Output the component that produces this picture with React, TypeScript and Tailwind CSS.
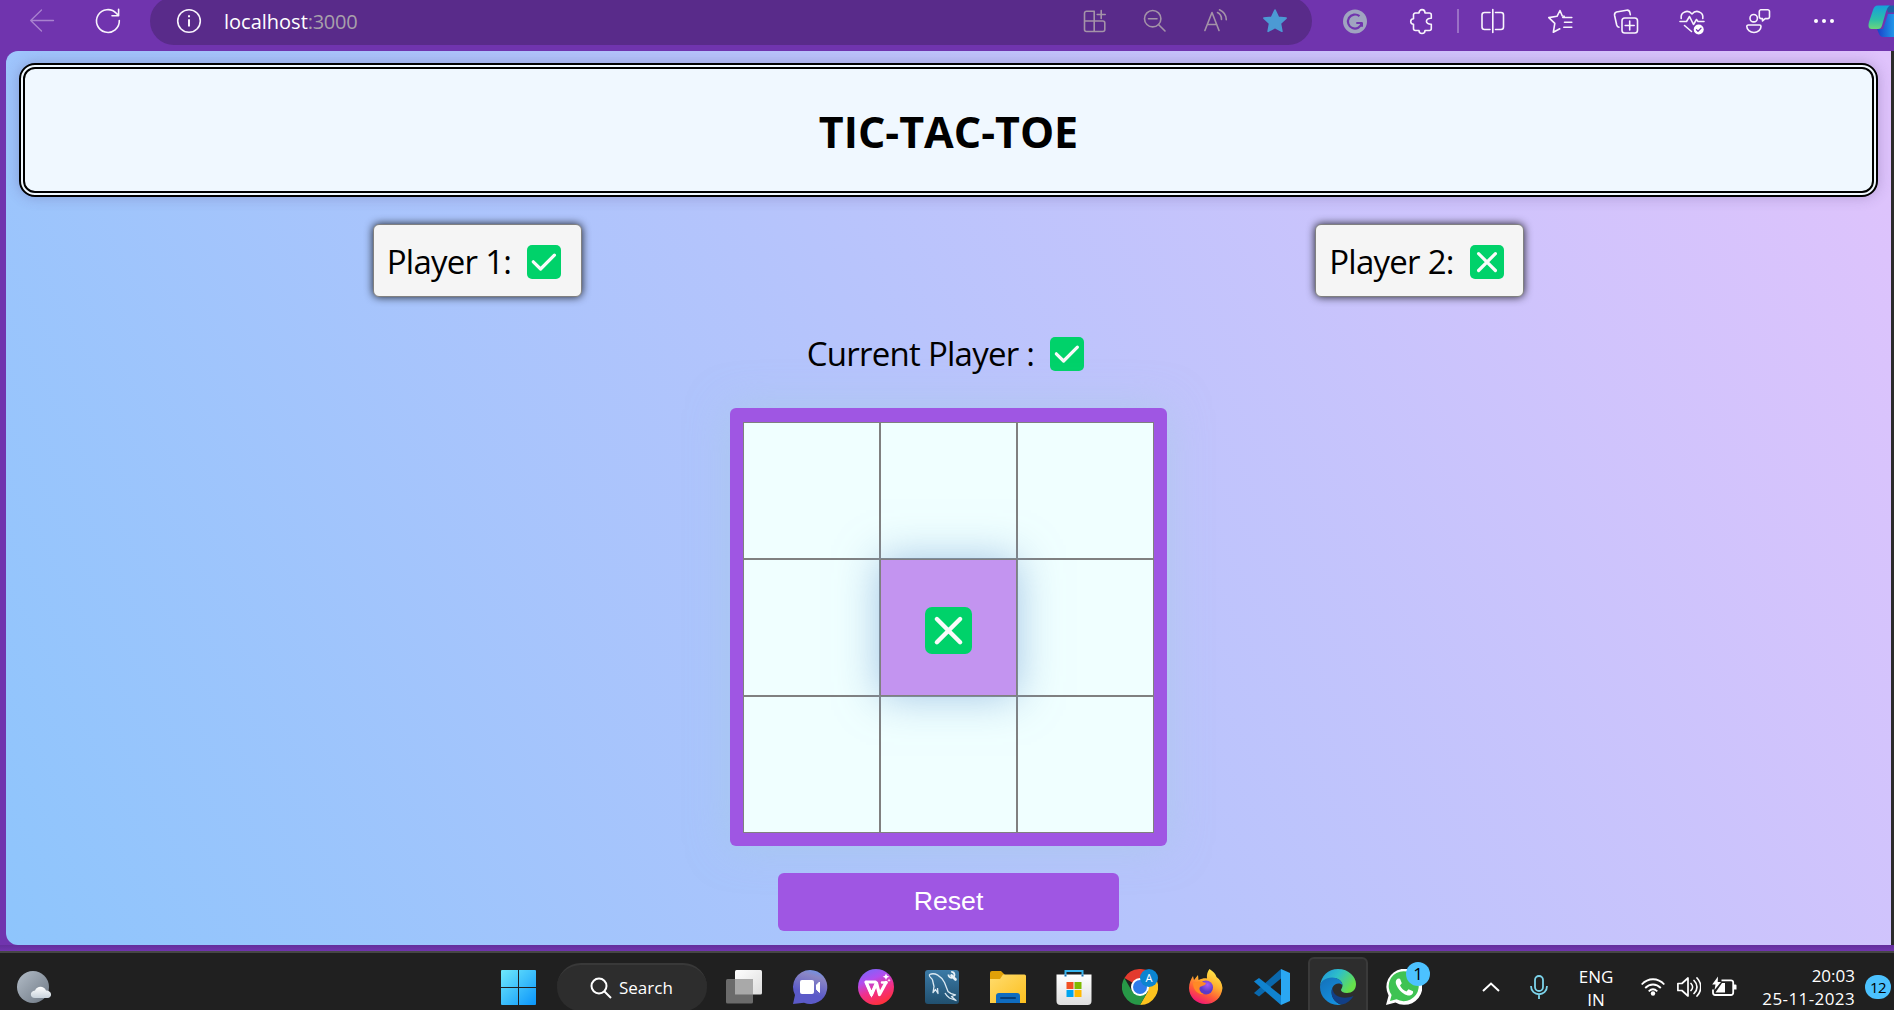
import type { ReactNode } from "react";

function Mark({ kind, className }: { kind: "check" | "cross"; className: string }) {
  return (
    <svg viewBox="0 0 34 34" className={className} fill="none" stroke="#fafafa" strokeWidth="3.2" strokeLinecap="round" strokeLinejoin="round">
      <rect width="34" height="34" rx="5" fill="#00d26a" stroke="none" />
      {kind === "check" ? <path d="M6.3 16.8l7.3 7.2L27.4 10.2" /> : <path d="M8.6 8.7l16.8 16.8M25.4 8.7L8.6 25.5" />}
    </svg>
  );
}

function Line({ children, color = "#f8f4fc" }: { children: ReactNode; color?: string }) {
  return (
    <svg viewBox="0 0 24 24" className="size-6 shrink-0 overflow-visible" fill="none" stroke={color} strokeWidth="1.6" strokeLinecap="round" strokeLinejoin="round">
      {children}
    </svg>
  );
}

function Slot({ children }: { children: ReactNode }) {
  return <div className="flex w-[66.2px] shrink-0 justify-center">{children}</div>;
}

function Toolbar() {
  const muted = "#a493a8";
  return (
    <header className="h-[51px] shrink-0 overflow-hidden bg-[#7034ae]">
      <div className="-mt-[3px] flex h-12 items-center">
        <div className="flex w-[150px] shrink-0 items-center gap-[42px] pl-[30px]">
          <Line color="#a982cf"><path d="M11.5 1L.7 11.5 11.5 22M.7 11.5h22.8" strokeWidth="1.3" /></Line>
          <Line><path d="M23.3 11.5A11.4 11.4 0 1 1 20.3 4.3L22.3 6.4M22.6 .3v6.4h-6.6" /></Line>
        </div>
        <div className="flex h-12 w-[1162px] shrink-0 items-center rounded-full bg-[#592b8a] pr-[25px] pl-[27px]">
          <Line><circle cx="12" cy="12" r="11.3" /><path d="M12 10.2v7.3M12 6.3v2" strokeWidth="2" strokeLinecap="butt" /></Line>
          <span className="ml-[23px] grow pt-[2px] text-[20px] leading-none text-white">localhost<span className="tracking-[-0.3px] text-[#a8a0ab]">:3000</span></span>
          <div className="flex gap-9">
            <Line color={muted}><path d="M11 2.2H3.5A2 2 0 0 0 1.5 4.2v16.3a2 2 0 0 0 2 2h16.3a2 2 0 0 0 2-2v-6.5a2 2 0 0 0-2-2H1.5M11.2 2.2v20.3M18.2 1.5v8M14.2 5.5h8" /></Line>
            <Line color={muted}><circle cx="9.7" cy="9.700" r="8.200" /><path d="M15.7 15.7l6.300 6.300M5.500 9.700h8.500" /></Line>
            <Line color={muted}><path d="M1.900 21.500L9 3.500l7 18M4.500 15.500h9.300M14.500 3.600c2.700 1.200 4 3.600 4 6.800M16.500 .8c4.300 2 6.800 5.800 6.800 10" /></Line>
            <Line color="#4c9ad4"><path d="M12 1l3.300 7.200 7.800 .9-5.700 5.400 1.500 7.800L12 18.500l-6.900 3.800 1.500-7.800L.9 9.100l7.800-.9z" fill="#4c9ad4" /></Line>
          </div>
        </div>
        <div className="ml-[10px] flex items-center">
          <Slot>
            <Line>
              <circle cx="12" cy="12.500" r="12" fill="#a0a4c0" stroke="none" />
              <path d="M16.500 7.200a7 7 0 1 0 2.300 6.800h-5.500M18.900 13.700v4" stroke="#7034ae" strokeWidth="2.200" strokeLinecap="butt" />
            </Line>
          </Slot>
          <div className="ml-px">
            <Slot>
              <Line>
                <path d="M3.500 6.500A2 2 0 0 1 5.500 4h3.500c0-4.500 6-4.500 6 0h4.300a2 2 0 0 1 2 2v3.300c-6.500-.5-6.500 6.200 0 6v4.200a2 2 0 0 1-2 2H15c0 4-6 4-6 0H5.500a2 2 0 0 1-2-2v-4.200c-3.700-.2-3.700-5.200 0-5.500z" />
              </Line>
            </Slot>
          </div>
          <div className="mr-px ml-[2px] h-6 w-[2px] bg-[#9a70c6]" />
          <Slot><Line><path d="M9 3.500H3.500a2.500 2.500 0 0 0-2.500 2.500v12a2.500 2.500 0 0 0 2.500 2.500H9M14.500 3.500H20A2.500 2.500 0 0 1 22.500 6v12a2.500 2.500 0 0 1-2.500 2.500h-5.500M11.800 .5v23" /></Line></Slot>
          <Slot><Line><path d="M16.200 7.300l-1.900-.3L12 1.500 9 7.300 .8 8.600l6 5.700-1.500 9 6.500-3.500M14.800 8.500h9M16.500 13.300h7.300M15.800 18.300h8" /></Line></Slot>
          <Slot><Line><rect x="8" y="9" width="15.500" height="15" rx="2.700" /><path d="M15.700 12v9M11.200 16.500h9M5 18.200c-1.600-.2-1.900-.8-2.300-2.200L.6 6.500C.3 4.700 1 3.500 2.500 3L12.500 1.200c2-.3 3 .6 3.300 2.100l.5 2.400" /></Line></Slot>
          <Slot>
            <Line>
              <path d="M1.200 9.500C.2 2.700 8 .2 12 5c4-4.800 11.800-2.300 10.800 4.500M0 12.500h6.500l3-5 4 8 3-5 1.500 2h6M4.500 16.500l7 6" />
              <circle cx="18.700" cy="20.500" r="5" fill="white" stroke="none" />
              <path d="M16.500 20.700l1.500 1.500 3-3" stroke="#7034ae" strokeWidth="1.300" />
            </Line>
          </Slot>
          <Slot><Line><circle cx="7.700" cy="9.200" r="3.700" /><path d="M2.500 16h11a1.500 1.500 0 0 1 1.500 1.500c0 3-3 6-7 6s-7.200-3-7.200-6A1.500 1.500 0 0 1 2.500 16zM14.700 .8h7a1.800 1.800 0 0 1 1.800 1.800v5.200a1.800 1.800 0 0 1-1.800 1.800h-2.500L16.500 12V9.600h-1.200c-1.200 0-2-.8-2-2v-5A1.800 1.800 0 0 1 14.700 .8z" /></Line></Slot>
          <Slot><Line><g fill="white" stroke="none"><circle cx="4" cy="12" r="2" /><circle cx="12" cy="12" r="2" /><circle cx="20" cy="12" r="2" /></g></Line></Slot>
          <svg viewBox="0 0 32 32" className="ml-[10px] size-8 shrink-0">
            <defs>
              <linearGradient id="cp1" x1="0" y1="0" x2="0" y2="1"><stop stopColor="#15a0dc" /><stop offset=".6" stopColor="#2dbfa8" /><stop offset="1" stopColor="#6bd67c" /></linearGradient>
              <linearGradient id="cp2" x1="0" y1="0" x2="1" y2="0"><stop stopColor="#1a3fc8" /><stop offset="1" stopColor="#22b5f5" /></linearGradient>
            </defs>
            <path d="M18 .5h9l2 7h-9z" fill="#1a62a8" />
            <path d="M9 24h6l5-15h12v23H15c-3 0-4-3-6-8z" fill="url(#cp2)" />
            <path d="M10 .5h12c-2 1-3 3-4 6l-4 14c-.7 2.500-2 3.500-4 3.500H3.500c-3 0-3.500-3-2.500-7l4-12C6 2 7 .5 10 .5z" fill="url(#cp1)" />
          </svg>
        </div>
      </div>
    </header>
  );
}

function PlayerCard({ label, kind }: { label: string; kind: "check" | "cross" }) {
  return (
    <div className="flex h-[73px] w-[209px] items-center rounded-md border border-[#808080] bg-[#f5f5f5] pt-[2px] pl-[13px] shadow-[0_0_8px_rgba(0,0,0,0.85)]">
      <span className="text-[33px] leading-[45px] tracking-[-0.75px] whitespace-nowrap">{label}</span>
      <Mark kind={kind} className="mt-px ml-4 size-[34px]" />
    </div>
  );
}

function Game() {
  const cells: ("check" | "cross" | null)[] = [null, null, null, null, "cross", null, null, null, null];
  return (
    <main className="flex h-[894px] w-[1885px] flex-col items-center overflow-hidden rounded-l-[12px] bg-[linear-gradient(62deg,#8EC5FC_0%,#E0C3FC_100%)] pt-3 text-black">
      <h1 className="flex h-[134px] w-[1859px] shrink-0 items-center justify-center rounded-[16px] border-[6px] border-double border-black bg-[#f0f8ff] pt-[5px] text-[43px] font-bold shadow-[0_0_14px_rgba(80,60,120,0.3)]">TIC-TAC-TOE</h1>
      <div className="mt-[27px] grid w-full grid-cols-2 justify-items-center">
        <PlayerCard label="Player 1:" kind="check" />
        <PlayerCard label="Player 2:" kind="cross" />
      </div>
      <div className="mt-[34px] flex h-[45px] items-center">
        <span className="text-[33px] leading-[45px] tracking-[-0.75px] whitespace-nowrap">Current Player :</span>
        <Mark kind="check" className="mt-px mr-[6px] ml-4 size-[34px]" />
      </div>
      <div className="mt-8 grid shrink-0 grid-cols-[repeat(3,137px)] grid-rows-[repeat(3,137px)] rounded-md bg-[#9f56e3] px-[13px] pt-[14px] pb-[13px] shadow-[0_0_40px_rgba(165,205,225,0.5)]">
        {cells.map((c, i) =>
          c ? (
            <div key={i} className="z-10 flex items-center justify-center border border-[#808080] bg-[#c394f0] pt-[5px] shadow-[0_0_40px_rgba(120,165,215,0.65)]">
              <Mark kind={c} className="size-[47px]" />
            </div>
          ) : (
            <div key={i} className="border border-[#808080] bg-[#f0ffff]" />
          ),
        )}
      </div>
      <button className="mt-[27px] h-[58px] w-[341px] shrink-0 rounded-md bg-[#9f56e3] pb-px font-['Liberation_Sans',sans-serif] text-[26.67px] leading-none text-white">Reset</button>
    </main>
  );
}

function App36({ children }: { children: ReactNode }) {
  return (
    <div className="flex w-[66px] shrink-0 justify-center">
      <svg viewBox="0 0 36 36" className="size-9 overflow-visible">{children}</svg>
    </div>
  );
}

function Taskbar() {
  return (
    <footer className="h-[59px] shrink-0 overflow-hidden bg-[#202020] text-white">
      <div className="flex h-[72px] items-center border-t-2 border-[#464646] pb-[2px]">
        <div className="w-[485px] shrink-0 pl-[17px]">
          <svg viewBox="0 0 36 36" className="size-9">
            <defs>
              <linearGradient id="moon" x1="0" y1="0" x2="1" y2="1"><stop stopColor="#b3bdc8" /><stop offset="1" stopColor="#6d7783" /></linearGradient>
              <linearGradient id="cloud" x1="0" y1="0" x2="0" y2="1"><stop stopColor="#fff" /><stop offset="1" stopColor="#c9d3dc" /></linearGradient>
            </defs>
            <circle cx="16" cy="18" r="16" fill="url(#moon)" />
            <path d="M18 29c-5.500 0-5.500-7 0-7.500 2-5 9-5 11 0 6.500 0 6.500 7.500 1.500 7.500z" fill="url(#cloud)" />
          </svg>
        </div>
        <App36>
          <defs>
            <linearGradient id="win" x1="0" y1="0" x2="1" y2="1"><stop stopColor="#6fe9fb" /><stop offset="1" stopColor="#0a95fb" /></linearGradient>
            <clipPath id="panes"><path d="M1 1h17v17H1zM19 1h17v17H19zM1 19h17v17H1zM19 19h17v17H19z" /></clipPath>
          </defs>
          <rect x="1" y="1" width="35" height="35" rx="1" fill="url(#win)" clipPath="url(#panes)" />
        </App36>
        <div className="mr-1 ml-[6px] flex h-12 w-[150px] shrink-0 items-center rounded-full border-t-2 border-[#393939] bg-[#2d2d2d] pl-[33px]">
          <svg viewBox="0 0 22 22" className="size-[22px]" fill="none" stroke="white" strokeWidth="2"><circle cx="9" cy="9" r="7.500" /><path d="M14.500 14.500l6.500 6.500" /></svg>
          <span className="ml-[7px] text-[17px]">Search</span>
        </div>
        <App36>
          <defs>
            <linearGradient id="tv" x1="0" y1="0" x2="1" y2="1"><stop stopColor="#fff" /><stop offset="1" stopColor="#dcdcdc" /></linearGradient>
          </defs>
          <rect x="9" y="1" width="27" height="24.500" rx="1.500" fill="url(#tv)" />
          <rect x="0" y="10" width="27" height="24.500" rx="1.500" fill="#6b6b6b" />
          <path d="M9 10h18v15.500H9z" fill="#a9a9a9" />
        </App36>
        <App36>
          <defs>
            <linearGradient id="meet" x1=".7" y1="0" x2=".4" y2="1"><stop stopColor="#6f93e8" /><stop offset=".2" stopColor="#8a86c4" /><stop offset=".7" stopColor="#5b5ac8" /></linearGradient>
          </defs>
          <path d="M18 1a17 17 0 1 1-6 32.800L1 35l2-9A17 17 0 0 1 18 1z" fill="url(#meet)" />
          <rect x="8" y="11" width="14" height="14" rx="2" fill="#fff" />
          <path d="M24.500 16l3-3v10.500l-3-3z" fill="#fff" stroke="#fff" strokeLinejoin="round" />
        </App36>
        <App36>
          <defs>
            <linearGradient id="wps" x1=".2" y1="0" x2=".6" y2="1"><stop stopColor="#7a66f8" /><stop offset=".3" stopColor="#b04ef0" /><stop offset=".6" stopColor="#f0308f" /><stop offset="1" stopColor="#ff3038" /></linearGradient>
          </defs>
          <circle cx="18" cy="18" r="18" fill="url(#wps)" />
          <path d="M17.500 13H8l5.500 12.500L18.500 14l3 11.500L28 13.500" fill="none" stroke="#fff" strokeWidth="3.200" strokeLinejoin="round" strokeLinecap="round" />
          <path d="M8 13l5.500 12.500 4-9.500M24 13.500h4.500" fill="none" stroke="#fff" strokeWidth="2.500" strokeLinecap="round" />
          <path d="M28 4.500l1 2.300 2.300 1-2.300 1-1 2.300-1-2.300-2.300-1 2.300-1zM31 9.500l.5 1.200 1.200 .5-1.200 .5-.5 1.200-.5-1.200-1.200-.5 1.200-.5z" fill="#fff" />
        </App36>
        <App36>
          <defs>
            <linearGradient id="sql" x1="0" y1="0" x2="0" y2="1"><stop stopColor="#3b7aa6" /><stop offset="1" stopColor="#21506f" /></linearGradient>
          </defs>
          <rect x="1" y="1" width="34" height="34" rx="3" fill="url(#sql)" />
          <path d="M5.500 5.500C11 3 17 7 20.500 13.500l3.500 9c2 2 4 3 7.500 3.500l-4 1.500 4.500 4-6.500-2.500c-2-1.500-3.500-3-4.500-5M5.500 5.500c-1 3 1.500 2.500 3 5.500l1.500 6.500-1 6 2.500-3 2.500 4-.5-5.500" fill="none" stroke="#dbe9f2" strokeWidth="1.300" strokeLinejoin="round" />
          <path d="M27.500 6.500l4 4" fill="none" stroke="#e8f1f7" strokeWidth="2.600" strokeLinecap="round" />
          <path d="M27.200 2.800a3 3 0 1 1-2.700 2.700" fill="none" stroke="#e8f1f7" strokeWidth="1.800" />
        </App36>
        <App36>
          <defs>
            <linearGradient id="fold" x1="0" y1="0" x2="1" y2="1"><stop stopColor="#ffdc6e" /><stop offset="1" stopColor="#fcbf1e" /></linearGradient>
          </defs>
          <path d="M0 4a2 2 0 0 1 2-2h9l4 4h-2v6H0z" fill="#e0a008" />
          <path d="M13 5.500h21.500a1.500 1.500 0 0 1 1.500 1.500v27H0V10h10z" fill="url(#fold)" />
          <path d="M6 34v-7a3 3 0 0 1 3-3h18a3 3 0 0 1 3 3v7z" fill="#0f6cc0" />
          <path d="M11 29h14" stroke="#063e78" strokeWidth="2" strokeLinecap="round" />
        </App36>
        <App36>
          <defs>
            <linearGradient id="store" x1="0" y1="0" x2="0" y2="1"><stop stopColor="#fff" /><stop offset="1" stopColor="#dedede" /></linearGradient>
          </defs>
          <path d="M9.500 7V2h17V7" fill="none" stroke="#36b4ee" strokeWidth="2" />
          <path d="M.5 5.500h35V32a4 4 0 0 1-4 4h-27a4 4 0 0 1-4-4z" fill="url(#store)" />
          <path d="M9.500 5.500V7.500M26.500 5.500V7.500" stroke="#0f6fb5" strokeWidth="2" />
          <path d="M10.500 13h7v7h-7z" fill="#f25022" /><path d="M18.500 13h7v7h-7z" fill="#7fba00" />
          <path d="M10.500 21h7v7h-7z" fill="#00a4ef" /><path d="M18.500 21h7v7h-7z" fill="#ffb900" />
        </App36>
        <div className="relative w-[66px] shrink-0">
          <svg viewBox="0 0 36 36" className="mx-auto size-9">
            <path d="M18 18L2.400 9A18 18 0 0 1 33.600 9z" fill="#e33b2e" />
            <path d="M18 9h15.600A18 18 0 0 1 18 36l7.800-13.500z" fill="#fcc31e" />
            <path d="M2.400 9A18 18 0 0 0 18 36l7.800-13.500L10.200 22.500z" fill="#279847" />
            <circle cx="18" cy="18" r="9" fill="#fff" /><circle cx="18" cy="18" r="7" fill="#2f7bea" />
          </svg>
          <span className="absolute top-0 right-[15px] flex size-[18px] items-center justify-center rounded-full bg-[#0b84d0] text-[11px]">A</span>
        </div>
        <App36>
          <defs>
            <linearGradient id="fox" x1=".8" y1="0" x2=".3" y2="1"><stop stopColor="#fff04d" /><stop offset=".4" stopColor="#ffb02e" /><stop offset=".7" stopColor="#ff5a38" /><stop offset="1" stopColor="#f0127a" /></linearGradient>
            <radialGradient id="globe" cx=".6" cy=".3"><stop stopColor="#a95cf5" /><stop offset="1" stopColor="#5b3ac8" /></radialGradient>
          </defs>
          <path d="M21.500 0c4 2.500 6 5 7 8 3.500 2.500 5.500 6 6 11-1 10-8 16-17 16S1 28 1 19c0-5 2-9 4-12l1 4 4-5 .5 5C14 9 18 9 19 9.500c-.5-4 .5-7 2.500-9.500z" fill="url(#fox)" />
          <circle cx="18" cy="18.500" r="7" fill="url(#globe)" />
          <path d="M5 14c5-2 9-2 13 0-1 3-3.500 2.500-6 4-2 3 1 6 4 7-6 1-11-4-11-11z" fill="#ff8a26" />
        </App36>
        <App36>
          <path d="M27 0v9.500L5 27.500 0 24z" fill="#0a68ad" />
          <path d="M27 36v-9.500L5 9 0 12.500z" fill="#1083d0" />
          <path d="M27 0l9 4v28l-9 4z" fill="#2aa7f2" />
        </App36>
        <div className="mx-[3px] flex h-[60px] w-[60px] shrink-0 items-center justify-center rounded-md border-2 border-[#3a3a3a] bg-[#2d2d2d]">
          <svg viewBox="0 0 36 36" className="size-9">
            <defs>
              <linearGradient id="e1" x1="0" y1="0" x2="1" y2=".5"><stop stopColor="#1c8fe0" /><stop offset=".5" stopColor="#2fc0c8" /><stop offset="1" stopColor="#66e04a" /></linearGradient>
              <linearGradient id="e2" x1="0" y1="0" x2=".6" y2="1"><stop stopColor="#1470b8" /><stop offset="1" stopColor="#1490e0" /></linearGradient>
            </defs>
            <path d="M0 17C1 7 8 0 18 0c11 0 18 8 18 15 0 6-4 9-9 9-4 0-6-1.500-6-3 0-1 1.500-2 1.500-4.500C22.500 12 18 9 13 9 6 9 1 13 0 17z" fill="url(#e1)" />
            <path d="M0 18C0 12 6 8.500 12 8.500c6.500 0 10.500 4 10.500 8-2-3-8-2.500-10 2C9 27 16 35 22 35.500 10 38 0 29 0 18z" fill="url(#e2)" />
            <path d="M12.500 18.500C9.500 26 14 34 22 35.500c5-1 9-4 11.500-8.500-10 4-21 1-21-8.500z" fill="#123f86" />
          </svg>
        </div>
        <div className="relative w-[66px] shrink-0">
          <svg viewBox="0 0 36 36" className="mx-auto size-9">
            <path d="M0 36l2.600-9.500A18 18 0 1 1 9.500 33.500z" fill="#fff" />
            <path d="M4 32l1.600-6A15 15 0 1 1 10.500 30.300z" fill="#3fc353" />
            <path d="M12 9.500c-3 1.500-3 5 0 9.500 3.500 5 8.500 8 12 7.500 2.500-.5 3.500-2.500 3-4.200l-4.500-2-2 2.200c-3-1.200-5-3-6.500-6l1.800-2.200-1.800-4.500z" fill="#fff" />
          </svg>
          <span className="absolute -top-[7px] right-[7px] flex size-6 items-center justify-center rounded-full bg-[#4cc2ff] text-[17px] text-black">1</span>
        </div>
        <div className="ml-[45px] flex shrink-0 items-center">
          <svg viewBox="0 0 18 10" className="h-[10px] w-[18px]" fill="none" stroke="white" strokeWidth="2"><path d="M1 9l8-7.500L17 9" /></svg>
          <svg viewBox="0 0 18 24" className="ml-[30px] h-6 w-[18px]" fill="none" stroke="#7cd3ea" strokeWidth="1.800"><rect x="5" y="1" width="8" height="15" rx="4" /><path d="M1 11c0 11 16 11 16 0M9 19v5" /></svg>
          <div className="ml-[18px] w-[60px] pt-px text-center text-[17px] leading-[23px]">ENG<br />IN</div>
          <svg viewBox="0 0 24 18" className="ml-[15px] h-[18px] w-6" fill="none" stroke="white" strokeWidth="1.800"><path d="M.7 6.500c6.500-7 16.100-7 22.600 0M4.200 10c4.600-4.700 11-4.700 15.600 0M7.700 13.300c2.700-2.600 5.900-2.600 8.600 0" /><circle cx="12" cy="15.500" r="2.200" fill="white" stroke="none" /></svg>
          <svg viewBox="0 0 24 20" className="ml-3 h-5 w-6" fill="none" stroke="white" strokeWidth="1.700" strokeLinejoin="round" strokeLinecap="round"><path d="M.9 6.500h4L11 1v18l-6.100-5.500h-4zM14 6.500c2 2 2 5 0 7M17 3.500c4 4 4 9 0 13M20 1c5 5.500 5 12.500 0 18" /></svg>
          <svg viewBox="0 0 25 20" className="ml-[11px] h-5 w-[25px] overflow-visible" fill="none" stroke="white" strokeWidth="1.800"><path d="M9.500 3.300h9.500a2.200 2.200 0 0 1 2.200 2.200v10.300a2.200 2.200 0 0 1-2.200 2.200H3.200A2.200 2.200 0 0 1 1 15.800V12.500" /><path d="M3.500 15.500L10 6h3v9.500zM22 7.500h1.500a1 1 0 0 1 1 1v4h-2.500zM6 -.5L.2 7.500h3.300L2.500 13 9 5H5.700z" fill="white" stroke="none" /></svg>
          <div className="ml-[17px] w-[101px] text-right text-[17px] leading-6"><div>20:03</div><div className="-mt-px leading-6 tracking-[0.4px]">25-11-2023</div></div>
          <span className="ml-[10px] flex h-6 w-[26px] items-center justify-center rounded-full bg-[#4cc2ff] text-[15px] tracking-[-0.5px] text-black">12</span>
        </div>
      </div>
    </footer>
  );
}

export default function App() {
  return (
    <div className="flex h-[1010px] w-[1894px] flex-col overflow-hidden font-['Open_Sans',sans-serif]">
      <Toolbar />
      <div className="flex h-[894px] shrink-0 bg-[#7034ae] pl-[6px]">
        <Game />
        <div className="w-[3px] bg-[#2b2b2b]" />
      </div>
      <div className="h-[6px] shrink-0 bg-gradient-to-b from-[#632e9b] to-[#7034ae]" />
      <Taskbar />
    </div>
  );
}
